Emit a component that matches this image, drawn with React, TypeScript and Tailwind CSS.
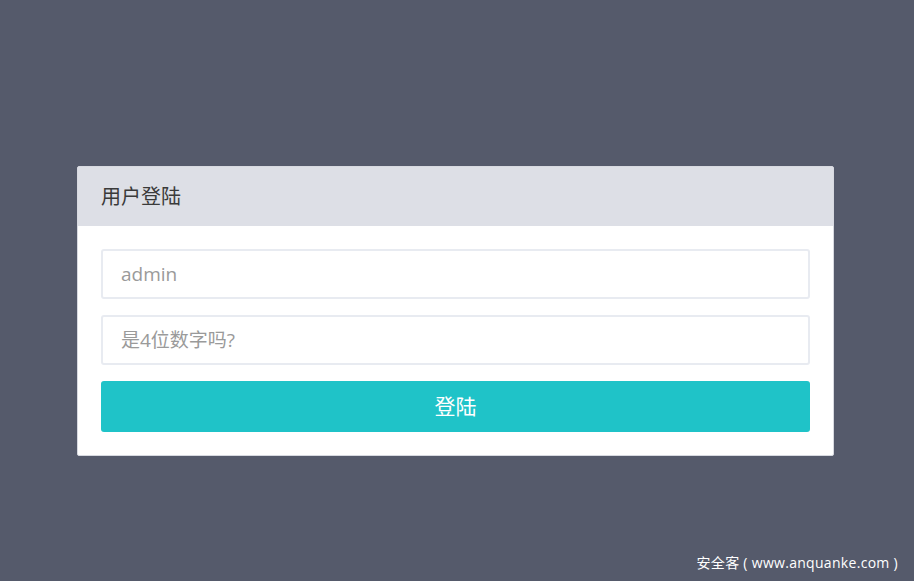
import React from "react";

const App = () => {
  return (
    <div
      className="h-[581px] w-full bg-[#555a6b] flex flex-col"
      style={{ fontFamily: '"Open Sans", "Noto Sans CJK SC", sans-serif' }}
    >
      <div className="mt-[166px] ml-[77px] w-[757px] border border-[#d7d9e0] rounded-[2px] bg-white">
        <div className="h-[59px] bg-[#dddfe6] flex items-center px-[23px] text-[20px] text-[#3a3a3a]">
          用户登陆
        </div>
        <form className="flex flex-col gap-4 px-[23px] pt-[23px] pb-[23px]">
          <input
            type="text"
            placeholder="admin"
            className="h-[50px] w-full rounded-[3px] border-2 border-[#e8ebf1] px-[18px] text-[19px] text-[#555] placeholder:text-[#9a9a9a] outline-none"
          />
          <input
            type="text"
            placeholder="是4位数字吗?"
            className="h-[50px] w-full rounded-[3px] border-2 border-[#e8ebf1] px-[18px] text-[19px] text-[#555] placeholder:text-[#9a9a9a] outline-none"
          />
          <button
            type="button"
            className="h-[51px] w-full rounded-[3px] bg-[#1fc3c8] text-white text-[21px]"
          >
            登陆
          </button>
        </form>
      </div>
      <div className="mt-auto pb-[8px] pr-[16px] text-right text-[14px] tracking-[0.3px] text-white">
        安全客 ( www.anquanke.com )
      </div>
    </div>
  );
};

export default App;
